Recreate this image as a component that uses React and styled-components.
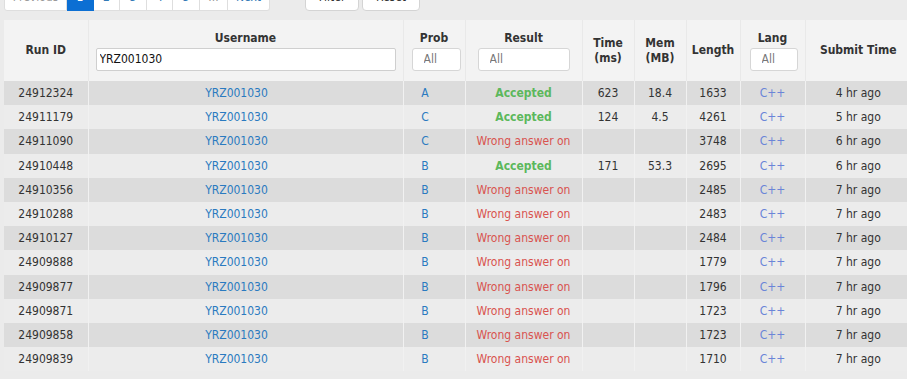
import React from "react";
import styled, { createGlobalStyle } from "styled-components";

const Global = createGlobalStyle`
  html, body { margin: 0; padding: 0; background: #ebebeb; overflow: hidden; }
  body { font-family: "DejaVu Sans Condensed", "DejaVu Sans", sans-serif; font-size: 12px; color: #333; }
`;

const Page = styled.div`
  padding-left: 4px;
  width: 1000px;
`;

const Toolbar = styled.div`
  height: 11px;
  overflow: hidden;
  display: flex;
  align-items: flex-end;
  margin-bottom: 9px;
`;

const Pager = styled.div`
  display: flex;
`;

const PageBtn = styled.div`
  height: 29px;
  width: ${(p) => p.$w}px;
  box-sizing: border-box;
  background: ${(p) => (p.$active ? "#0c6fd3" : "#fff")};
  color: ${(p) => (p.$active ? "#fff" : p.$muted ? "#999" : "#337ab7")};
  border: 1px solid ${(p) => (p.$active ? "#0c6fd3" : "#dedede")};
  border-left-width: ${(p) => (p.$first ? 1 : 0)}px;
  border-radius: ${(p) => (p.$first ? "0 0 0 3px" : p.$last ? "0 0 3px 0" : "0")};
  display: flex;
  align-items: center;
  justify-content: center;
`;

const ActionGroup = styled.div`
  display: flex;
  gap: 3px;
  margin-left: 35px;
`;

const ActionBtn = styled.div`
  height: 29px;
  width: ${(p) => p.$w}px;
  box-sizing: border-box;
  background: #fff;
  border: 1px solid #d4d4d4;
  border-radius: 4px;
  color: #333;
  display: flex;
  align-items: center;
  justify-content: center;
`;

const Table = styled.table`
  border-collapse: collapse;
  table-layout: fixed;
  width: 907px;
`;

const HeadRow = styled.tr`
  background: #f3f3f3;
  height: 61px;
`;

const Th = styled.th`
  font-weight: bold;
  color: #333;
  text-align: center;
  vertical-align: middle;
  padding: 0;
  line-height: 15px;
  border-right: 1px solid #e9e9e9;
  &:last-child { border-right: none; }
`;

const Label = styled.div`
  margin-bottom: 2px;
`;

const TextInput = styled.input`
  display: block;
  box-sizing: border-box;
  width: ${(p) => p.$w}px;
  height: 23px;
  margin: 0 auto;
  border: 1px solid #cfcfcf;
  border-radius: 2px;
  background: #fff;
  font: inherit;
  font-weight: normal;
  color: #111;
  padding: 0 3px;
  outline: none;
`;

const Select = styled.select`
  display: block;
  box-sizing: border-box;
  width: ${(p) => p.$w}px;
  height: 23px;
  margin: 0 auto;
  position: relative;
  left: ${(p) => p.$nudge || 0}px;
  border: 1px solid #d6d6d6;
  border-radius: 3px;
  background: #fff;
  font: inherit;
  font-weight: normal;
  color: #777;
  padding: 0 0 0 11px;
  appearance: none;
  -webkit-appearance: none;
  outline: none;
`;

const Row = styled.tr`
  height: 24.2px;
  background: ${(p) => (p.$odd ? "#dcdcdc" : "#ececec")};
`;

const Td = styled.td`
  padding: 0 ${(p) => p.$shift || 0}px 0 0;
  text-align: center;
  vertical-align: middle;
  white-space: nowrap;
  overflow: hidden;
  border-right: 1px solid #f1f1f1;
  color: ${(p) => p.$color || "#333"};
  font-weight: ${(p) => (p.$bold ? "bold" : "normal")};
  &:last-child { border-right: none; }
`;

const Link = styled.span`
  color: ${(p) => p.$color || "#2a7ac0"};
`;

const cols = [84, 315, 62, 117, 52, 52, 54, 65, 106];

const rows = [
  ["24912324", "A", "ac", "623", "18.4", "1633", "4 hr ago"],
  ["24911179", "C", "ac", "124", "4.5", "4261", "5 hr ago"],
  ["24911090", "C", "wa", "", "", "3748", "6 hr ago"],
  ["24910448", "B", "ac", "171", "53.3", "2695", "6 hr ago"],
  ["24910356", "B", "wa", "", "", "2485", "7 hr ago"],
  ["24910288", "B", "wa", "", "", "2483", "7 hr ago"],
  ["24910127", "B", "wa", "", "", "2484", "7 hr ago"],
  ["24909888", "B", "wa", "", "", "1779", "7 hr ago"],
  ["24909877", "B", "wa", "", "", "1796", "7 hr ago"],
  ["24909871", "B", "wa", "", "", "1723", "7 hr ago"],
  ["24909858", "B", "wa", "", "", "1723", "7 hr ago"],
  ["24909839", "B", "wa", "", "", "1710", "7 hr ago"],
];

const pages = [
  ["Previous", 63],
  ["1", 27],
  ["2", 26],
  ["3", 27],
  ["4", 26],
  ["5", 27],
  ["...", 28],
  ["Next", 42],
];

export default function App() {
  return (
    <Page>
      <Global />
      <Toolbar>
        <Pager>
          {pages.map(([t, w], i) => (
            <PageBtn
              key={t}
              $w={w}
              $active={t === "1"}
              $muted={t === "Previous" || t === "..."}
              $first={i === 0}
              $last={i === pages.length - 1}
            >
              {t}
            </PageBtn>
          ))}
        </Pager>
        <ActionGroup>
          <ActionBtn $w={54}>Filter</ActionBtn>
          <ActionBtn $w={58}>Reset</ActionBtn>
        </ActionGroup>
      </Toolbar>
      <Table>
        <colgroup>
          {cols.map((w, i) => (
            <col key={i} style={{ width: w }} />
          ))}
        </colgroup>
        <thead>
          <HeadRow>
            <Th>Run ID</Th>
            <Th>
              <Label>Username</Label>
              <TextInput $w={300} defaultValue="YRZ001030" />
            </Th>
            <Th>
              <Label>Prob</Label>
              <Select $w={49} $nudge={2}>
                <option>All</option>
              </Select>
            </Th>
            <Th>
              <Label>Result</Label>
              <Select $w={92}>
                <option>All</option>
              </Select>
            </Th>
            <Th>
              Time
              <br />
              (ms)
            </Th>
            <Th>
              Mem
              <br />
              (MB)
            </Th>
            <Th>Length</Th>
            <Th>
              <Label>Lang</Label>
              <Select $w={48} $nudge={1}>
                <option>All</option>
              </Select>
            </Th>
            <Th>Submit Time</Th>
          </HeadRow>
        </thead>
        <tbody>
          {rows.map((r, i) => (
            <Row key={r[0]} $odd={i % 2 === 0}>
              <Td>{r[0]}</Td>
              <Td $shift={18}>
                <Link>YRZ001030</Link>
              </Td>
              <Td $shift={18}>
                <Link>{r[1]}</Link>
              </Td>
              {r[2] === "ac" ? (
                <Td $color="#5cb85c" $bold>
                  Accepted
                </Td>
              ) : (
                <Td $color="#d9534f">Wrong answer on</Td>
              )}
              <Td>{r[3]}</Td>
              <Td>{r[4]}</Td>
              <Td>{r[5]}</Td>
              <Td>
                <Link $color="#6a85d8">C++</Link>
              </Td>
              <Td>{r[6]}</Td>
            </Row>
          ))}
        </tbody>
      </Table>
    </Page>
  );
}
